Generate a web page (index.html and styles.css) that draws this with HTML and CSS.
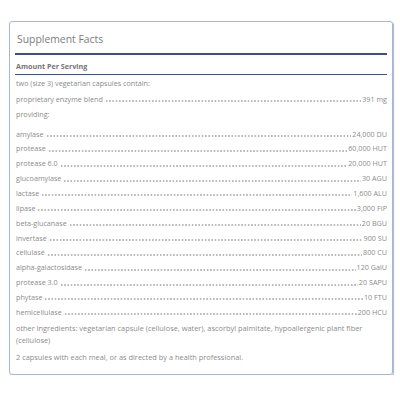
FILE: index.html
```html
<!DOCTYPE html>
<html>
<head>
<meta charset="utf-8">
<link rel="stylesheet" href="styles.css">
</head>
<body>
<div class="panel">
  <h2 class="title">Supplement Facts</h2>
  <div class="serving-head">Amount Per Serving</div>
  <div class="row intro">two (size 3) vegetarian capsules contain:</div>
  <div class="row blend"><span class="name">proprietary enzyme blend</span><span class="leader"></span><span class="val">391 mg</span></div>
  <div class="row providing">providing:</div>
  <div class="list">
    <div class="row"><span class="name">amylase</span><span class="leader"></span><span class="val">24,000 DU</span></div>
    <div class="row"><span class="name">protease</span><span class="leader"></span><span class="val">60,000 HUT</span></div>
    <div class="row"><span class="name">protease 6.0</span><span class="leader"></span><span class="val">20,000 HUT</span></div>
    <div class="row"><span class="name">glucoamylase</span><span class="leader"></span><span class="val">30 AGU</span></div>
    <div class="row"><span class="name">lactase</span><span class="leader"></span><span class="val">1,600 ALU</span></div>
    <div class="row"><span class="name">lipase</span><span class="leader"></span><span class="val">3,000 FIP</span></div>
    <div class="row"><span class="name">beta-glucanase</span><span class="leader"></span><span class="val">20 BGU</span></div>
    <div class="row"><span class="name">invertase</span><span class="leader"></span><span class="val">900 SU</span></div>
    <div class="row"><span class="name">cellulase</span><span class="leader"></span><span class="val">800 CU</span></div>
    <div class="row"><span class="name">alpha-galactosidase</span><span class="leader"></span><span class="val">120 GalU</span></div>
    <div class="row"><span class="name">protease 3.0</span><span class="leader"></span><span class="val">20 SAPU</span></div>
    <div class="row"><span class="name">phytase</span><span class="leader"></span><span class="val">10 FTU</span></div>
    <div class="row"><span class="name">hemicellulase</span><span class="leader"></span><span class="val">200 HCU</span></div>
  </div>
  <p class="other">other ingredients: vegetarian capsule (cellulose, water), ascorbyl palmitate, hypoallergenic plant fiber (cellulose)</p>
  <p class="dose">2 capsules with each meal, or as directed by a health professional.</p>
</div>
</body>
</html>
```

FILE: styles.css
```css
* { box-sizing: border-box; }
html, body { margin: 0; padding: 0; background: #fff; }
body {
  font-family: "Open Sans", "Liberation Sans", sans-serif;
  color: #8c8c8c;
  padding: 21px 7px 0 9px;
}
.panel {
  width: 384px;
  height: 354px;
  border: 1px solid #aab3dc;
  border-radius: 3px;
  box-shadow: 1px 1px 1px rgba(120, 132, 190, 0.6);
  padding: 0 5px;
}
.title {
  margin: 0;
  padding: 9px 0 6px 2px;
  font-size: 10.4px;
  line-height: 16px;
  font-weight: 400;
  color: #7d7d7d;
  border-bottom: 2.5px solid #34509c;
}
.serving-head {
  padding: 5px 0 2px 1px;
  font-size: 7.2px;
  line-height: 12px;
  font-weight: 700;
  color: #747474;
  border-bottom: 1.5px solid #34509c;
}
.row {
  display: flex;
  align-items: stretch;
  font-size: 7.2px;
  line-height: 14.87px;
  height: 14.87px;
  padding-left: 1px;
  white-space: nowrap;
}
.intro { margin-top: 0.5px; }
.blend { margin-top: 1.5px; }
.providing { margin-top: 0.5px; }
.list { margin-top: 4.5px; }
.leader {
  flex: 1;
  margin: 0 1px;
  background-image: radial-gradient(circle, #9a9a9a 0.5px, rgba(154,154,154,0) 0.95px);
  background-size: 3.3px 2px;
  background-repeat: repeat-x;
  background-position: 1px calc(100% - 4.5px);
}
.val { text-align: right; }
.other {
  margin: 2px 0 0;
  padding-left: 1px;
  font-size: 7.4px;
  line-height: 12.5px;
}
.dose {
  margin: 4px 0 0;
  padding-left: 1px;
  font-size: 7.4px;
  line-height: 12.5px;
}
```
